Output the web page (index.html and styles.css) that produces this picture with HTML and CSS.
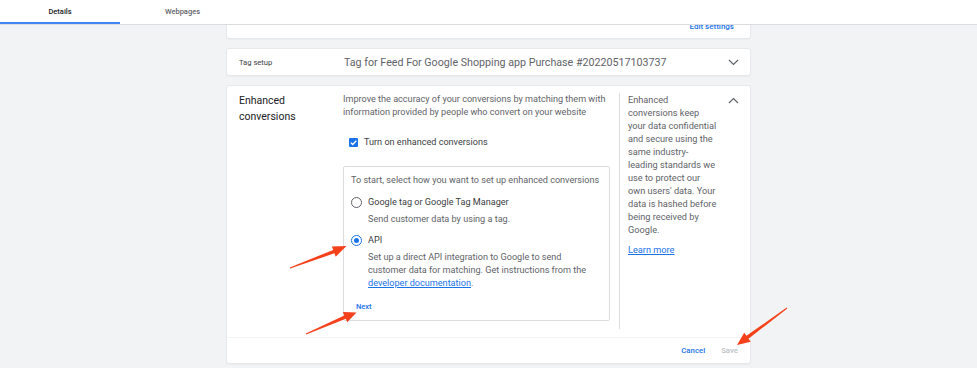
FILE: index.html
```html
<!DOCTYPE html>
<html>
<head>
	<meta charset="utf-8">
	<title>Conversion action details</title>
	<link rel="stylesheet" href="styles.css">
</head>
<body>
	<header class="tabs">
		<div class="tab tab-active">Details</div>
		<div class="tab">Webpages</div>
	</header>

	<main class="content">
		<section class="card card-clipped">
			<a class="link edit-link">Edit settings</a>
		</section>

		<section class="card tag-row">
			<div class="tag-label">Tag setup</div>
			<div class="tag-value">Tag for Feed For Google Shopping app Purchase #20220517103737</div>
			<svg class="chevron" width="11" height="7" viewBox="0 0 11 7"><path d="M1 1l4.5 4.5L10 1" fill="none" stroke="#5f6368" stroke-width="1.2"/></svg>
		</section>

		<section class="card ec-card">
			<div class="ec-body">
				<h2 class="ec-title">Enhanced conversions</h2>

				<div class="ec-main">
					<p class="ec-desc">Improve the accuracy of your conversions by matching them with information provided by people who convert on your website</p>

					<label class="check-row">
						<span class="checkbox">
							<svg width="9" height="9" viewBox="0 0 9 9"><path d="M1.8 4.6l1.9 1.9 3.6-3.8" fill="none" stroke="#fff" stroke-width="1.3"/></svg>
						</span>
						Turn on enhanced conversions
					</label>

					<div class="setup-box">
						<p class="setup-intro">To start, select how you want to set up enhanced conversions</p>

						<div class="option">
							<span class="radio"></span>
							<div>
								<div class="opt-label">Google tag or Google Tag Manager</div>
								<div class="opt-help">Send customer data by using a tag.</div>
							</div>
						</div>

						<div class="option option-api">
							<span class="radio radio-on"></span>
							<div>
								<div class="opt-label">API</div>
								<div class="opt-help">Set up a direct API integration to Google to send customer data for matching. Get instructions from the <a class="link doc-link">developer documentation</a>.</div>
							</div>
						</div>

						<a class="link next">Next</a>
					</div>
				</div>

				<aside class="ec-side">
					<p>Enhanced conversions keep your data confidential and secure using the same industry-leading standards we use to protect our own users' data. Your data is hashed before being received by Google.</p>
					<a class="link learn">Learn more</a>
				</aside>

				<div class="ec-toggle">
					<svg class="chevron" width="11" height="7" viewBox="0 0 11 7"><path d="M1 6l4.5-4.5L10 6" fill="none" stroke="#5f6368" stroke-width="1.2"/></svg>
				</div>
			</div>

			<div class="ec-footer">
				<a class="link btn-text">Cancel</a>
				<a class="btn-text btn-disabled">Save</a>
			</div>
		</section>
	</main>

	<!-- annotation arrows drawn over the screenshot -->
	<svg class="arrows" width="977" height="368" viewBox="0 0 977 368">
		<polygon points="290.2,268.5 334.4,253.3 335.7,256.7 346.5,246 331.9,246.5 333.2,249.9 289.8,267.5" />
		<polygon points="306.2,334.5 345.8,318.8 347.2,322.2 356.5,312.5 342.9,312.1 344.3,315.5 305.8,333.5" />
		<polygon points="787.3,308.4 748.5,338.7 750.7,341.7 737,345 744.2,332.8 746.4,335.8 786.7,307.6" />
	</svg>
</body>
</html>
```

FILE: styles.css
```css
* {
	margin: 0;
	padding: 0;
	box-sizing: border-box;
}

body {
	background-color: #f1f3f4;
	font-family: Roboto, "Liberation Sans", sans-serif;
	color: #202124;
	position: relative;
	height: 368px;
	overflow: hidden;
}

.link {
	color: #1a73e8;
	text-decoration: none;
}

/* tabs */

.tabs {
	display: flex;
	height: 25px;
	background: white;
	border-bottom: 1px solid #dadce0;
	position: relative;
	z-index: 2;
}

.tab {
	width: 120px;
	text-align: center;
	font-size: 7.5px;
	font-weight: 500;
	line-height: 24px;
	color: #5f6368;
}

.tab + .tab {
	width: 125px;
}

.tab-active {
	color: #202124;
	border-bottom: 2px solid #4285f4;
}

/* cards */

.content {
	width: 523px;
	margin: 0 auto;
}

.card {
	background: white;
	box-shadow: 0 0 0 1px #e6e8eb, 0 1px 2px rgba(60, 64, 67, 0.12);
	border-radius: 0 0 2px 2px;
}

.card-clipped {
	height: 13px;
	overflow: hidden;
	display: flex;
	justify-content: flex-end;
	padding-right: 16px;
}

.edit-link {
	font-size: 8px;
	font-weight: 500;
	line-height: 12px;
	margin-top: -4px;
}

.tag-row {
	margin-top: 11px;
	height: 26px;
	display: flex;
	align-items: center;
	padding: 0 11px 0 12px;
	border-radius: 2px;
}

.tag-label {
	width: 105px;
	font-size: 7.6px;
	color: #3c4043;
}

.tag-value {
	flex: 1;
	font-size: 10.7px;
	color: #5f6368;
}

/* enhanced conversions */

.ec-card {
	margin-top: 11px;
	border-radius: 2px;
}

.ec-body {
	display: grid;
	grid-template-columns: 104px 267px 111px 18px;
	padding: 7px 11px 8px 12px;
}

.ec-title {
	font-size: 10.5px;
	font-weight: 400;
	line-height: 16px;
	width: 80px;
}

.ec-main {
	font-size: 9.1px;
	line-height: 13px;
}

.ec-desc {
	color: #5f6368;
	margin-right: -4px;
}

.check-row {
	display: flex;
	align-items: center;
	margin: 17px 0 0 6px;
	color: #3c4043;
}

.checkbox {
	display: flex;
	width: 9px;
	height: 9px;
	margin-right: 6px;
	border-radius: 1px;
	background: #1a73e8;
}

.setup-box {
	margin: 17px 0 8px;
	border: 1px solid #dadce0;
	border-radius: 2px;
	padding: 7px 2px 8px 7px;
}

.setup-intro {
	color: #5f6368;
}

.option {
	display: flex;
	margin-top: 9px;
}

.option-api {
	margin-top: 8px;
}

.radio {
	flex: none;
	position: relative;
	width: 11px;
	height: 11px;
	margin: 1px 6px 0 0;
	border: 1.4px solid #5f6368;
	border-radius: 50%;
}

.radio-on {
	border-color: #1a73e8;
}

.radio-on::before {
	content: "";
	position: absolute;
	left: -5px;
	top: -5px;
	width: 18px;
	height: 18px;
	border-radius: 50%;
	background: #e8f0fe;
	z-index: -1;
}

.radio-on::after {
	content: "";
	position: absolute;
	left: 1.6px;
	top: 1.6px;
	width: 5px;
	height: 5px;
	border-radius: 50%;
	background: #1a73e8;
}

.option > div {
	position: relative;
	z-index: 1;
	max-width: 226px;
}

.opt-label {
	color: #3c4043;
}

.opt-help {
	margin-top: 4px;
	color: #5f6368;
}

.doc-link {
	text-decoration: underline;
}

.next {
	display: block;
	margin: 12px 0 0 5px;
	font-size: 7.5px;
	font-weight: 500;
	line-height: 10px;
}

.ec-side {
	margin-left: 9px;
	padding: 0 4px 0 8px;
	border-left: 1px solid #dadce0;
	font-size: 9.2px;
	line-height: 13px;
	color: #5f6368;
}

.learn {
	display: inline-block;
	margin-top: 7px;
	text-decoration: underline;
}

.ec-toggle {
	display: flex;
	justify-content: flex-end;
	padding-top: 4px;
}

.ec-footer {
	display: flex;
	justify-content: flex-end;
	align-items: center;
	gap: 16px;
	height: 26px;
	padding: 0 12px;
	border-top: 1px solid #f1f3f4;
}

.btn-text {
	font-size: 7.8px;
	font-weight: 500;
}

.btn-disabled {
	color: #bdc1c6;
}

.arrows {
	position: absolute;
	left: 0;
	top: 0;
	z-index: 3;
	pointer-events: none;
	fill: #f4411c;
}
```
